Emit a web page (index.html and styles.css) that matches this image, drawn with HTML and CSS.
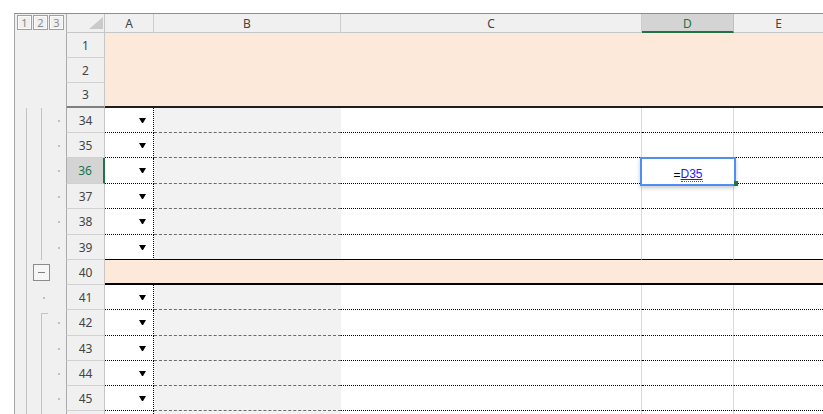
FILE: index.html
```html
<!DOCTYPE html>
<html>
<head>
<meta charset="utf-8">
<link rel="stylesheet" href="styles.css">
</head>
<body>
<div class="sheet">
  <div class="hol"><span class="lvl">1</span><span class="lvl">2</span><span class="lvl">3</span></div>
  <div class="corner"><i class="tri"></i></div>
  <div class="ch">A</div><div class="ch">B</div><div class="ch">C</div><div class="ch sel">D</div><div class="ch last">E</div>

  <div class="ol"></div><div class="rh">1</div><div class="band"></div>
  <div class="ol"></div><div class="rh">2</div>
  <div class="ol"></div><div class="rh frz">3</div>

  <div class="ol o23"><i class="dot"></i></div><div class="rh">34</div><div class="ca"><i class="arr"></i></div><div class="cb"></div><div class="cc"></div><div class="cd"></div><div class="ce"></div>
  <div class="ol o23"><i class="dot"></i></div><div class="rh">35</div><div class="ca"><i class="arr"></i></div><div class="cb"></div><div class="cc"></div><div class="cd"></div><div class="ce"></div>
  <div class="ol o23"><i class="dot"></i></div><div class="rh sel">36</div><div class="ca"><i class="arr"></i></div><div class="cb"></div><div class="cc"></div><div class="cd act"><div class="edit">=<span class="ref">D35</span><i class="fh"></i></div></div><div class="ce"></div>
  <div class="ol o23"><i class="dot"></i></div><div class="rh">37</div><div class="ca"><i class="arr"></i></div><div class="cb"></div><div class="cc"></div><div class="cd"></div><div class="ce"></div>
  <div class="ol o23"><i class="dot"></i></div><div class="rh">38</div><div class="ca"><i class="arr"></i></div><div class="cb"></div><div class="cc"></div><div class="cd"></div><div class="ce"></div>
  <div class="ol o23"><i class="dot"></i></div><div class="rh">39</div><div class="ca solid"><i class="arr"></i></div><div class="cb solid"></div><div class="cc solid"></div><div class="cd solid"></div><div class="ce solid"></div>

  <div class="ol o2"><i class="minus"></i></div><div class="rh">40</div><div class="band40"></div>

  <div class="ol o2"><i class="dot d3"></i></div><div class="rh">41</div><div class="ca"><i class="arr"></i></div><div class="cb"></div><div class="cc"></div><div class="cd"></div><div class="ce"></div>
  <div class="ol o23s"><i class="dot"></i></div><div class="rh">42</div><div class="ca"><i class="arr"></i></div><div class="cb"></div><div class="cc"></div><div class="cd"></div><div class="ce"></div>
  <div class="ol o23"><i class="dot"></i></div><div class="rh">43</div><div class="ca"><i class="arr"></i></div><div class="cb"></div><div class="cc"></div><div class="cd"></div><div class="ce"></div>
  <div class="ol o23"><i class="dot"></i></div><div class="rh">44</div><div class="ca"><i class="arr"></i></div><div class="cb"></div><div class="cc"></div><div class="cd"></div><div class="ce"></div>
  <div class="ol o23"><i class="dot"></i></div><div class="rh">45</div><div class="ca"><i class="arr"></i></div><div class="cb"></div><div class="cc"></div><div class="cd"></div><div class="ce"></div>
  <div class="ol o23"></div><div class="rh"></div><div class="ca"></div><div class="cb"></div><div class="cc"></div><div class="cd"></div><div class="ce"></div>
</div>
</body>
</html>
```
FILE: styles.css
```css
* { box-sizing: border-box; margin: 0; padding: 0; }
html, body { background: #fff; overflow: hidden; }
body { width: 823px; height: 414px; font-family: "Noto Sans", sans-serif; }

.sheet {
  margin: 13px 0 0 14px;
  height: 401px;
  border-top: 1px solid #8e8e8e;
  border-left: 1px solid #a6a6a6;
  display: grid;
  grid-template-columns: 51px 39px 49px 187px 301px 92px 1fr;
  grid-template-rows: 19px 25px 25px 25px 25px 25px 26px 25px 26px 25px 25px 25px 26px 25px 25px 25px 25px;
  overflow: hidden;
}

/* header row */
.hol { background: #f0f0f0; display: flex; gap: 1px; padding: 1px 0 0 2px; }
.lvl {
  width: 15px; height: 15px;
  border: 1px solid #a0a0a0;
  box-shadow: inset 0 0 0 1px #fbfbfb;
  background: #f0f0f0;
  font-size: 11px; line-height: 1; color: #8a8a8a;
  display: flex; align-items: center; justify-content: center;
}
.corner {
  background: #f0f0f0;
  border-left: 1px solid #b0b0b0;
  border-right: 1px solid #c6c6c6;
  border-bottom: 1px solid #c6c6c6;
  display: flex; align-items: flex-end; justify-content: flex-end;
  padding: 0 1px 3px 0;
}
.tri { width: 0; height: 0; border-left: 14px solid transparent; border-bottom: 12px solid #cacaca; }
.ch {
  background: #f0f0f0;
  border-right: 1px solid #cdcdcd;
  border-bottom: 1px solid #c6c6c6;
  display: flex; align-items: center; justify-content: center;
  font-size: 12px; color: #444; padding-top: 1px;
}
.ch.sel { background: #d4d4d4; color: #217346; border-bottom: 2px solid #217346; border-right-color: #c0c0c0; }
.ch.last { border-right: none; }

/* outline column */
.ol { background-color: #f0f0f0; display: flex; align-items: center; }
.o2 {
  background-image: linear-gradient(#c3c3c3, #c3c3c3);
  background-size: 1px 100%;
  background-position: 11px 0;
  background-repeat: no-repeat;
}
.o23 {
  background-image: linear-gradient(#c3c3c3, #c3c3c3), linear-gradient(#c3c3c3, #c3c3c3);
  background-size: 1px 100%, 1px 100%;
  background-position: 11px 0, 26px 0;
  background-repeat: no-repeat;
}
.o23s {
  background-image: linear-gradient(#c3c3c3, #c3c3c3), linear-gradient(#c3c3c3, #c3c3c3), linear-gradient(#c3c3c3, #c3c3c3);
  background-size: 1px 100%, 1px 100%, 7px 1px;
  background-position: 11px 0, 26px 3px, 26px 3px;
  background-repeat: no-repeat;
}
.dot { width: 2px; height: 2px; background: #c0c0c0; margin-left: 43px; }
.dot.d3 { margin-left: 28px; }
.minus {
  margin-left: 18px; width: 17px; height: 17px;
  border: 1px solid #8c8c8c; background: #f6f6f6;
  display: flex; align-items: center; justify-content: center;
}
.minus::before { content: ""; width: 7px; height: 1px; background: #808080; }

/* row headers */
.rh {
  background: #f0f0f0;
  border-left: 1px solid #ababab;
  border-right: 1px solid #c6c6c6;
  border-bottom: 1px solid #d0d0d0;
  display: flex; align-items: center; justify-content: center;
  font-size: 12px; color: #444;
}
.rh.frz { border-bottom: 2px solid #808080; }
.rh.sel { background: #d4d4d4; color: #217346; border-right: 2px solid #217346; }

/* cells */
.band { grid-column: span 5; grid-row: span 3; background: #fde9d9; border-bottom: 2px solid #1e1e1e; }
.band40 { grid-column: span 5; background: #fde9d9; border-bottom: 2px solid #000; }

.ca {
  background: #fff;
  border-right: 1px dotted #000;
  border-bottom: 1px dotted #000;
  display: flex; align-items: center; justify-content: flex-end;
  padding-right: 7px;
}
.arr { width: 1px; height: 0; border-left: 3px solid transparent; border-right: 3px solid transparent; border-top: 5px solid #000; box-sizing: content-box; }
.cb { background: #f2f2f2; border-bottom: 1px dashed #6a6a6a; }
.cc, .cd { background: #fff; border-right: 1px solid #dadada; border-bottom: 1px dotted #000; }
.ce { background: #fff; border-bottom: 1px dotted #000; }
.solid { border-bottom: 1px solid #000; }

/* active cell editor */
.cd.act { position: relative; }
.edit {
  position: absolute; left: -2px; top: -1px;
  width: 96px; height: 29px;
  border: 2px solid #4f8ef3;
  background: #fff;
  box-shadow: 0 2px 4px rgba(0, 0, 0, 0.22);
  display: flex; align-items: flex-end; justify-content: center;
  padding-bottom: 2px;
  font-family: "Liberation Sans", sans-serif; font-size: 12px; line-height: 14px; color: #000;
  z-index: 2;
}
.ref { color: #1a1aff; text-decoration: underline; text-decoration-color: #1a1aff; border-bottom: 1px dotted #e02020; }
.fh { position: absolute; right: -4px; bottom: -2px; width: 4px; height: 5px; background: #217346; }
```
